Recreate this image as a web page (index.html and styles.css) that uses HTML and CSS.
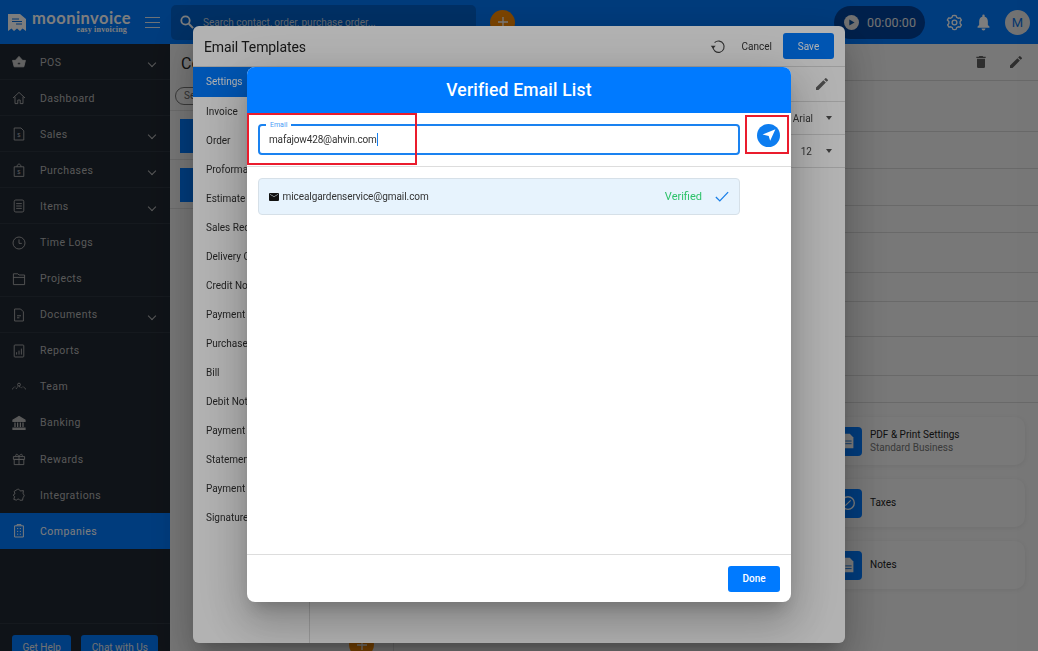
FILE: index.html
```html
<!DOCTYPE html>
<html lang="en">
<head>
<meta charset="utf-8">
<title>Moon Invoice</title>
<link rel="stylesheet" href="styles.css">
</head>
<body>
<div class="app">
  <header class="topbar">
    <div class="brand">
      <svg class="brand-icon" viewBox="0 0 18 18"><path d="M0 1h12l6 5v12l-3.500-2.500L12 18l-3-2.500L6 18l-2.500-2.500L0 18z" fill="#fff"/><path d="M4 6h7M4 8.500h10M8 11h6" stroke="#0a6fe0" stroke-width="1"/></svg>
      <div class="brand-text"><span class="brand-name">mooninvoice</span><span class="brand-sub">easy invoicing</span></div>
    </div>
    <svg class="burger" viewBox="0 0 15 11"><path d="M0 .5h15M0 5.500h15M0 10.500h15" stroke="#dfe8f2" stroke-width="1"/></svg>
    <div class="search">
      <svg class="search-icon" viewBox="0 0 14 14"><circle cx="5.500" cy="5.500" r="4.200" fill="none" stroke="#fff" stroke-width="1.800"/><path d="M8.800 8.800l4.300 4.300" stroke="#fff" stroke-width="2"/></svg>
      <span>Search contact, order, purchase order...</span>
    </div>
    <div class="fab"><svg viewBox="0 0 12 12"><path d="M6 1v10M1 6h10" stroke="#fff" stroke-width="1.300"/></svg></div>
    <div class="top-right">
      <div class="timer">
        <span class="play"><svg viewBox="0 0 8 8"><path d="M1.500.5l6 3.500-6 3.500z" fill="#0a4f9c"/></svg></span>
        <span>00:00:00</span>
      </div>
      <svg class="top-icon gear" viewBox="0 0 24 24"><path d="M12 3l2 .3.800 2.300 1.800 1 2.400-.5 1.700 2.800-1.600 1.900v2.400l1.600 1.900-1.700 2.800-2.400-.5-1.800 1-.8 2.300-2 .3-2-.3-.8-2.300-1.800-1-2.400.5-1.700-2.800 1.600-1.900v-2.400L2.900 8.900l1.700-2.800 2.400.5 1.800-1 .8-2.300z" fill="none" stroke="#fff" stroke-width="1.700" stroke-linejoin="round"/><circle cx="12" cy="12" r="3" fill="none" stroke="#fff" stroke-width="1.700"/></svg>
      <svg class="top-icon bell" viewBox="0 0 24 24"><path d="M12 22a2.500 2.500 0 0 0 2.500-2.500h-5A2.500 2.500 0 0 0 12 22zm7.500-5l-2-2v-4.500c0-2.900-1.500-5.200-4-5.800V3.500a1.500 1.500 0 0 0-3 0v1.200c-2.500.6-4 2.900-4 5.800V15l-2 2v1.500h15z" fill="#fff"/></svg>
      <div class="avatar">M</div>
    </div>
  </header>
  <div class="shell">
    <nav class="sidebar">
      <div class="menu">
        <a class="item line"><svg viewBox="0 0 20 20"><path d="M2 8h16l-2 8H4zM5.500 8l4.500-5 4.500 5" fill="#c8c8c8" stroke="#c8c8c8" stroke-width="1.200"/><circle cx="10" cy="12" r="1.500" fill="#1f2731"/></svg><span>POS</span><i class="chev"></i></a>
        <a class="item line"><svg viewBox="0 0 20 20"><path d="M2.500 10L10 3l7.500 7M5 8.500V17h3.500v-4.500h3V17H15V8.500"/></svg><span>Dashboard</span></a>
        <a class="item line"><svg viewBox="0 0 20 20"><path d="M4 2.500h8.500L16 6v11.500H4z"/><text x="10" y="14" class="mini">$</text></svg><span>Sales</span><i class="chev"></i></a>
        <a class="item line"><svg viewBox="0 0 20 20"><path d="M4 6h12v12H4zM7.500 6c0-4.500 5-4.500 5 0"/><text x="10" y="15" class="mini">$</text></svg><span>Purchases</span><i class="chev"></i></a>
        <a class="item line"><svg viewBox="0 0 20 20"><rect x="4" y="2.500" width="12" height="15" rx="2"/><path d="M6.500 7h7M6.500 10h7M6.500 13h7"/></svg><span>Items</span><i class="chev"></i></a>
        <a class="item"><svg viewBox="0 0 20 20"><circle cx="10" cy="10" r="7.500"/><path d="M10 5.500V10.500H13.500"/></svg><span>Time Logs</span></a>
        <a class="item line"><svg viewBox="0 0 20 20"><path d="M3 5V3.500h5.500L10 5h7v12H3zM3 8h14"/></svg><span>Projects</span></a>
        <a class="item line"><svg viewBox="0 0 20 20"><path d="M4.500 2.500h7.500L15.500 6v11.500h-11zM7.500 11h5M7.500 13.500h3"/></svg><span>Documents</span><i class="chev"></i></a>
        <a class="item"><svg viewBox="0 0 20 20"><rect x="4" y="2.500" width="12" height="15" rx="1"/><path d="M7 14.500v-3M10 14.500v-5M13 14.500V7"/></svg><span>Reports</span></a>
        <a class="item"><svg viewBox="0 0 20 20"><circle cx="10" cy="7" r="1.800"/><path d="M6.500 12.500c0-4 7-4 7 0M2 13c0-2.500 2.500-3.500 4-3M18 13c0-2.500-2.500-3.500-4-3" stroke-dasharray="1.500 1"/></svg><span>Team</span></a>
        <a class="item"><svg viewBox="0 0 20 20"><path d="M10 2L2.500 6.500V8h15V6.500zM2.500 16.500h15V18h-15zM5 9.500v5.500M8.300 9.500v5.500M11.700 9.500v5.500M15 9.500v5.500" fill="#b8b8b8" stroke-width="1.600"/></svg><span>Banking</span></a>
        <a class="item"><svg viewBox="0 0 20 20"><path d="M3 7h14v3.500H3zM4 10.500h12V17H4zM10 7v10M10 7C8 2.500 4.500 4 6.500 7M10 7c2-4.500 5.500-3 3.500 0"/></svg><span>Rewards</span></a>
        <a class="item"><svg viewBox="0 0 20 20"><path d="M8 3c2-1 3 1 3.500 2l4-.5-.5 4c2 1 2 3.500 0 4.500l-.5 3.500H11c-1-2-3-2-4 0l-3.500-1 1-3.500c-2-1-2-3 .5-3.500L4 5.500z"/></svg><span>Integrations</span></a>
        <a class="item active"><svg viewBox="0 0 20 20"><path d="M7.500 3.500V2h5v1.500M4.500 3.500h11v14h-11zM7.500 7h1.500M11 7h1.500M7.500 10.500h1.500M11 10.500h1.500M7.500 14h1.500M11 14h1.500" stroke-width="1.200"/></svg><span>Companies</span></a>
      </div>
      <div class="help">
        <a class="help-btn">Get Help</a>
        <a class="help-btn">Chat with Us</a>
      </div>
    </nav>
    <main class="main">
      <section class="col-list">
        <h1 class="page-title">Companies</h1>
        <div class="chip-row"><span class="chip">Search</span></div>
        <div class="company"><span class="tile"></span></div>
        <div class="company"><span class="tile"></span></div>
        <div class="fab fab-low"><svg viewBox="0 0 12 12"><path d="M6 1v10M1 6h10" stroke="#fff" stroke-width="1.300"/></svg></div>
      </section>
      <section class="col-detail">
        <div class="detail-bar">
          <svg class="act" viewBox="0 0 24 24"><path d="M6 19a2 2 0 0 0 2 2h8a2 2 0 0 0 2-2V7H6zM19 4h-3.500l-1-1h-5l-1 1H5v2h14z"/></svg>
          <svg class="act" viewBox="0 0 24 24"><path d="M3 17.250V21h3.750L17.800 9.900l-3.700-3.700zM20.700 7a1 1 0 0 0 0-1.400l-2.300-2.300a1 1 0 0 0-1.400 0l-1.800 1.800 3.700 3.700z"/></svg>
        </div>
        <div class="rows">
          <span></span><span></span><span></span><span></span><span></span><span></span><span></span><span></span><span></span><span></span>
        </div>
        <div class="cards">
          <div class="card">
            <span class="card-icon"><svg viewBox="0 0 20 20"><path d="M5 2h7l4 4v12H5z" fill="#fff"/><path d="M7 10h7M7 13h7" stroke="#0a6fe0"/></svg></span>
            <div class="card-text"><b>PDF &amp; Print Settings</b><small>Standard Business</small></div>
          </div>
          <div class="card">
            <span class="card-icon"><svg viewBox="0 0 20 20"><circle cx="10" cy="10" r="7" fill="none" stroke="#fff" stroke-width="1.500"/><path d="M7 13l6-6" stroke="#fff" stroke-width="1.200"/></svg></span>
            <div class="card-text"><b>Taxes</b></div>
          </div>
          <div class="card">
            <span class="card-icon"><svg viewBox="0 0 20 20"><path d="M5 2h7l4 4v12H5z" fill="#fff"/><path d="M7 11h7M7 14h7" stroke="#0a6fe0"/></svg></span>
            <div class="card-text"><b>Notes</b></div>
          </div>
        </div>
      </section>
    </main>
  </div>
</div>

<div class="scrim"></div>
<section class="tmpl">
  <header class="tmpl-head">
    <h2>Email Templates</h2>
    <svg class="reset" viewBox="0 0 24 24"><path d="M6.500 6.500A8 8 0 1 1 4 12.500" fill="none" stroke="#444" stroke-width="1.600"/><path d="M1 11l3.500 4 3.500-4z" fill="#444"/></svg>
    <span class="cancel">Cancel</span>
    <button class="save">Save</button>
  </header>
  <div class="tmpl-body">
    <ul class="tmpl-nav">
      <li class="on">Settings</li><li>Invoice</li><li>Order</li><li>Proforma</li><li>Estimate</li><li>Sales Receipt</li><li>Delivery Challan</li><li>Credit Note</li><li>Payment</li><li>Purchase</li><li>Bill</li><li>Debit Note</li><li>Payment</li><li>Statement</li><li>Payment</li><li>Signature</li>
    </ul>
    <div class="tmpl-main">
      <div class="tmpl-row r-edit"><svg class="act" viewBox="0 0 24 24"><path d="M3 17.250V21h3.750L17.800 9.900l-3.700-3.700zM20.700 7a1 1 0 0 0 0-1.400l-2.300-2.300a1 1 0 0 0-1.400 0l-1.800 1.800 3.700 3.700z"/></svg></div>
      <div class="tmpl-row"><span class="sel-arial">Arial</span><i class="tri"></i></div>
      <div class="tmpl-row"><span class="sel-size">12</span><i class="tri"></i></div>
    </div>
  </div>
</section>

<div class="scrim"></div>
<section class="verify">
  <header class="verify-head">Verified Email List</header>
  <div class="verify-form">
    <div class="field">
      <label>Email</label>
      <div class="value">mafajow428@ahvin.com<span class="caret"></span></div>
    </div>
    <button class="send"><svg viewBox="0 0 24 24"><path d="M1 11L23 2l-9 20-2.500-8.500z" fill="#fff"/></svg></button>
  </div>
  <div class="verify-list">
    <div class="mail-row">
      <svg class="mail" viewBox="0 0 20 16"><path d="M0 2a2 2 0 0 1 2-2h16a2 2 0 0 1 2 2v12a2 2 0 0 1-2 2H2a2 2 0 0 1-2-2zm2 1l8 5 8-5v-1l-8 5-8-5z" fill="#111" fill-rule="evenodd"/></svg>
      <span class="addr">micealgardenservice@gmail.com</span>
      <span class="ok">Verified</span>
      <svg class="tick" viewBox="0 0 16 12"><path d="M1 6.500L5.500 11 15 1" fill="none" stroke="#1a7fe8" stroke-width="1.500"/></svg>
    </div>
  </div>
  <footer class="verify-foot"><button class="done">Done</button></footer>
  <div class="mark mark-field"></div>
  <div class="mark mark-send"></div>
</section>
</body>
</html>
```

FILE: styles.css
```css
* { box-sizing: border-box; }
html, body { margin: 0; height: 100%; overflow: hidden; }
body { font-family: Roboto, "Liberation Sans", sans-serif; font-size: 10px; color: #222; }
h1, h2, ul { margin: 0; padding: 0; }
li { list-style: none; }
button { font-family: inherit; border: 0; }

.app { display: flex; flex-direction: column; height: 651px; background: #f4f4f4; }

/* top bar */
.topbar { flex: none; height: 44px; background: #007aff; display: flex; align-items: center; color: #fff; }
.brand { display: flex; align-items: center; width: 145px; padding-left: 8px; gap: 6px; }
.brand-icon { width: 18px; height: 18px; }
.brand-text { display: flex; flex-direction: column; width: 95px; }
.brand-name { font-family: Lato, sans-serif; font-weight: 700; font-size: 16.500px; line-height: 16px; letter-spacing: .45px; white-space: nowrap; }
.brand-sub { font-family: "Liberation Serif", serif; font-weight: 700; font-size: 8px; line-height: 8px; letter-spacing: .2px; text-align: right; }
.burger { width: 15px; height: 11px; flex: none; }
.search { width: 305px; height: 35px; margin-left: 11px; background: #0063cf; border-radius: 5px; display: flex; align-items: center; padding-left: 9px; gap: 9px; color: #c8d4e2; font-size: 10px; }
.search-icon { width: 14px; height: 14px; }
.fab { width: 25px; height: 25px; border-radius: 50%; background: #ff8c00; display: flex; align-items: center; justify-content: center; margin-left: 14px; }
.fab svg { width: 12px; height: 12px; }
.fab-low { position: absolute; left: 179px; top: 588px; margin: 0; }
.top-right { margin-left: auto; display: flex; align-items: center; padding-right: 8px; }
.timer { width: 91px; height: 33px; border-radius: 17px; background: #00439b; display: flex; align-items: center; gap: 8px; padding-left: 10px; font-size: 12.500px; color: #e8e8e8; letter-spacing: .1px; }
.play { width: 15px; height: 15px; border-radius: 50%; background: #e8e8e8; display: flex; align-items: center; justify-content: center; }
.play svg { width: 7px; height: 7px; }
.top-icon { width: 19px; height: 19px; }
.gear { margin-left: 20px; }
.bell { margin-left: 10px; }
.avatar { width: 25px; height: 25px; margin-left: 12px; border-radius: 50%; background: #e9e9e9; color: #0a6fe0; display: flex; align-items: center; justify-content: center; font-size: 13px; }

.shell { flex: 1; display: flex; min-height: 0; }

/* sidebar */
.sidebar { flex: none; width: 170px; background: #1f2731; display: flex; flex-direction: column; color: #b4b4b4; }
.menu { flex: 1; }
.item { height: 36.100px; display: flex; align-items: center; padding-left: 11px; gap: 13px; font-size: 10.500px; letter-spacing: .45px; }
.item.line { box-shadow: inset 0 -1px 0 #2c343e; }
.item svg { width: 16px; height: 16px; fill: none; stroke: #b4b4b4; stroke-width: 1.100; flex: none; }
.item .mini { font-size: 7px; text-anchor: middle; fill: #b4b4b4; stroke: none; font-family: "Liberation Sans", sans-serif; }
.chev { margin-left: auto; margin-right: 15px; margin-top: 2px; width: 6px; height: 6px; border-right: 1px solid #b4b4b4; border-bottom: 1px solid #b4b4b4; transform: rotate(45deg); }
.item.active { background: #007aff; color: #fff; height: 36px; }
.item.active svg { stroke: #fff; }
.help { flex: none; height: 28px; border-top: 1px solid #2c343e; padding: 11px 0 0 12px; display: flex; gap: 10px; overflow: hidden; }
.help-btn { height: 30px; border-radius: 3px; background: #007aff; color: #e8e8e8; padding: 7px 10.500px 0; font-size: 10px; }

/* main page */
.main { flex: 1; display: flex; min-width: 0; position: relative; }
.col-list { width: 224px; flex: none; border-right: 1px solid #dcdcdc; }
.page-title { font-size: 16px; font-weight: 400; color: #222; height: 37px; padding: 10px 0 0 11px; }
.chip-row { height: 30px; padding: 6px 0 0 5px; border-bottom: 1px solid #ddd; }
.chip { display: inline-block; height: 18px; border: 1px solid #777; border-radius: 9px; padding: 2px 8px; font-size: 10px; color: #666; }
.company { height: 49px; padding: 8px 0 0 10px; border-bottom: 1px solid #ddd; }
.tile { display: block; width: 90px; height: 34px; background: #007aff; }
.col-detail { flex: 1; display: flex; flex-direction: column; min-width: 0; }
.detail-bar { height: 37px; flex: none; display: flex; justify-content: flex-end; align-items: center; gap: 19px; padding: 0 14px 0 0; border-bottom: 1px solid #d6d6d6; }
.act { width: 16px; height: 16px; fill: #5e5e5e; }
.rows { flex: none; display: grid; grid-template-rows: 51px 37px 37px 27px 40px 29px 35px 39px 27px 14px; }
.rows span { border-bottom: 1px solid #d6d6d6; }
.rows span:last-child { border: 0; }
.cards { align-self: flex-end; width: 200px; margin-right: 13px; display: flex; flex-direction: column; gap: 14px; }
.card { height: 48px; border-radius: 10px; background: #f6f6f6; box-shadow: 0 1px 5px rgba(0,0,0,.07); display: flex; align-items: center; padding-left: 8px; gap: 8px; }
.card-icon { width: 29px; height: 29px; border-radius: 4px; background: #007aff; display: flex; align-items: center; justify-content: center; flex: none; }
.card-icon svg { width: 18px; height: 18px; }
.card-text { display: flex; flex-direction: column; font-size: 10px; line-height: 12.500px; padding-top: 1px; }
.card-text b { font-weight: 400; color: #222; }
.card-text small { font-size: 10px; color: #777; }

/* dim layers */
.scrim { position: fixed; inset: 0; background: rgba(0,0,0,.3); }

/* Email Templates modal */
.tmpl { position: fixed; left: 193px; top: 26px; width: 652px; height: 617px; background: #fff; border-radius: 6px; box-shadow: 0 11px 15px -7px rgba(0,0,0,.2), 0 24px 38px 3px rgba(0,0,0,.14), 0 9px 46px 8px rgba(0,0,0,.12); display: flex; flex-direction: column; overflow: hidden; }
.tmpl-head { flex: none; height: 41px; display: flex; align-items: center; padding: 0 11px; border-bottom: 1px solid #ddd; }
.tmpl-head h2 { font-size: 14px; font-weight: 400; color: #222; padding-top: 1px; letter-spacing: -.1px; }
.reset { width: 17px; height: 17px; margin-left: auto; }
.cancel { font-size: 10px; margin-left: 15px; color: #333; }
.save { width: 51px; height: 26px; margin-left: 11px; border-radius: 3px; background: #007aff; color: #fff; font-size: 10px; }
.tmpl-body { flex: 1; display: flex; min-height: 0; }
.tmpl-nav { width: 117px; flex: none; border-right: 1px solid #ddd; }
.tmpl-nav li { height: 29px; padding: 9px 0 0 13px; font-size: 10px; white-space: nowrap; overflow: hidden; color: #333; }
.tmpl-nav li.on { height: 30px; background: #007aff; color: #fff; }
.tmpl-main { flex: 1; }
.tmpl-row { height: 33px; display: flex; align-items: center; justify-content: flex-end; padding-right: 13px; border-bottom: 1px solid #ddd; font-size: 10px; color: #444; }
.r-edit { height: 35px; padding-right: 15px; }
.r-edit .act { fill: #666; }
.sel-arial { margin-right: 13px; }
.sel-size { margin-right: 14px; }
.tri { width: 0; height: 0; border: 3.500px solid transparent; border-top: 4px solid #555; border-bottom: 0; }

/* Verified Email List modal */
.verify { position: fixed; left: 247px; top: 67px; width: 544px; height: 535px; background: #fff; border-radius: 8px; overflow: hidden; box-shadow: 0 11px 15px -7px rgba(0,0,0,.2), 0 24px 38px 3px rgba(0,0,0,.14), 0 9px 46px 8px rgba(0,0,0,.12); display: flex; flex-direction: column; }
.verify-head { flex: none; height: 46px; background: #007aff; color: #fff; display: flex; align-items: center; justify-content: center; font-size: 17.500px; font-weight: 500; letter-spacing: .2px; }
.verify-form { flex: none; height: 54px; display: flex; align-items: center; padding: 0 11px; gap: 17px; border-bottom: 1px solid #ddd; }
.field { width: 482px; height: 31px; border: 2px solid #1a82f0; border-radius: 4px; position: relative; display: flex; align-items: center; padding-left: 9px; margin-top: -1px; }
.field label { position: absolute; left: 6px; top: -5px; padding: 0 4px; background: #fff; font-size: 7px; line-height: 8px; color: #4a9cf5; }
.value { font-size: 10px; color: #333; letter-spacing: -.15px; }
.caret { display: inline-block; width: 1px; height: 13px; background: #1a82f0; vertical-align: -3px; }
.send { width: 23px; height: 23px; border-radius: 50%; background: #0d7df0; padding: 4.500px; display: flex; margin-top: -9px; }
.send svg { width: 14px; height: 14px; }
.verify-list { flex: 1; padding: 11px 51px 0 11px; }
.mail-row { height: 37px; background: #e7f3fd; border: 1px solid #d6e0e8; border-radius: 4px; display: flex; align-items: center; padding: 0 10px; font-size: 10px; }
.mail { width: 10px; height: 8px; margin-right: 3.500px; }
.addr { color: #333; letter-spacing: -.07px; }
.ok { margin-left: auto; color: #2ec26a; font-size: 11px; }
.tick { width: 14px; height: 11px; margin-left: 13px; }
.verify-foot { flex: none; height: 48px; border-top: 1px solid #ddd; display: flex; justify-content: flex-end; align-items: center; padding: 0 11px; }
.done { width: 52px; height: 26px; border-radius: 3px; background: #007aff; color: #fff; font-size: 10px; font-weight: 500; }
.mark { position: absolute; border: 2px solid #ea1c2d; }
.mark-field { left: 0; top: 46px; width: 170px; height: 52px; }
.mark-send { left: 498px; top: 48px; width: 44px; height: 39px; }
```
